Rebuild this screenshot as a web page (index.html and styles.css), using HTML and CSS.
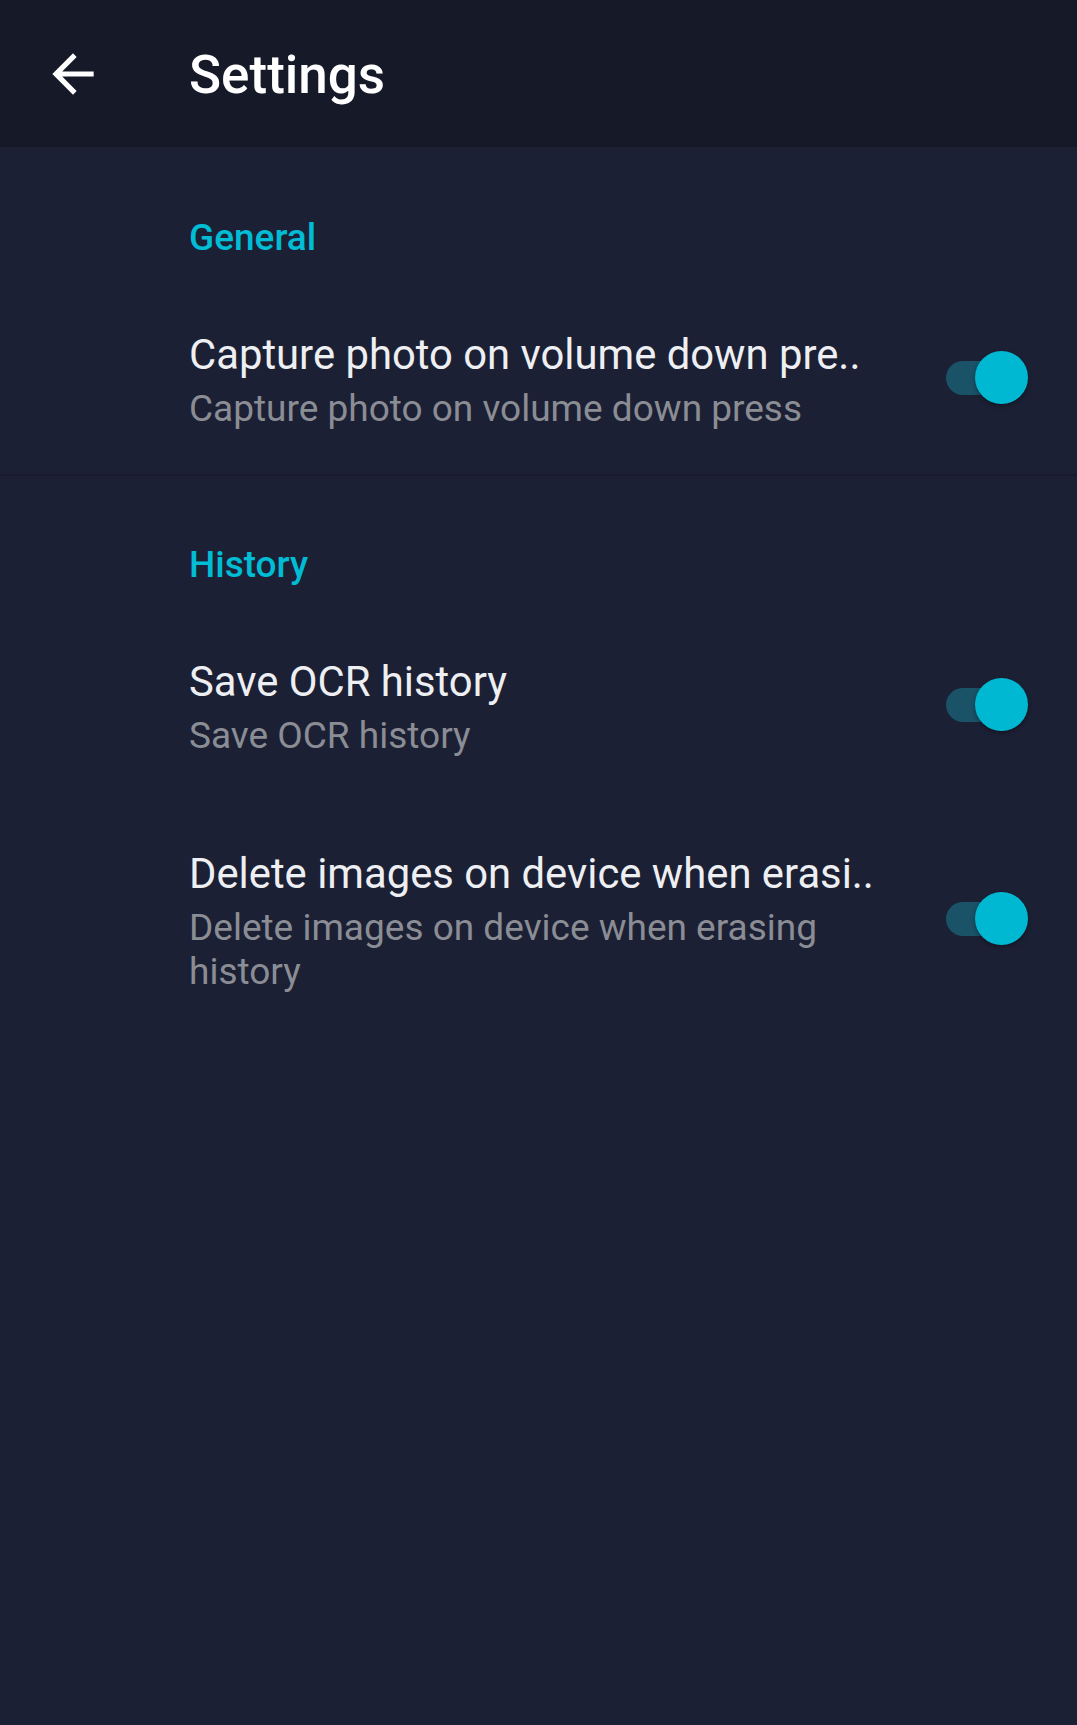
FILE: index.html
```html
<!DOCTYPE html>
<html lang="en">
<head>
<meta charset="utf-8">
<title>Settings</title>
<link rel="stylesheet" href="styles.css">
</head>
<body>
<header class="appbar">
  <svg class="back" viewBox="0 0 24 24" aria-hidden="true"><path d="M20 11H7.83l5.59-5.59L12 4l-8 8 8 8 1.41-1.41L7.83 13H20v-2z" fill="#ffffff"/></svg>
  <h1 class="title">Settings</h1>
</header>
<main>
  <section class="section">
    <div class="category">General</div>
    <div class="item">
      <div class="text">
        <div class="item-title">Capture photo on volume down pre..</div>
        <div class="item-sub">Capture photo on volume down press</div>
      </div>
      <div class="switch"><span class="track"></span><span class="thumb"></span></div>
    </div>
  </section>
  <section class="section">
    <div class="category">History</div>
    <div class="item">
      <div class="text">
        <div class="item-title">Save OCR history</div>
        <div class="item-sub">Save OCR history</div>
      </div>
      <div class="switch"><span class="track"></span><span class="thumb"></span></div>
    </div>
    <div class="item">
      <div class="text">
        <div class="item-title">Delete images on device when erasi..</div>
        <div class="item-sub">Delete images on device when erasing history</div>
      </div>
      <div class="switch"><span class="track"></span><span class="thumb"></span></div>
    </div>
  </section>
</main>
</body>
</html>
```

FILE: styles.css
```css
html, body {
  margin: 0;
  padding: 0;
}
body {
  background: #1c2034;
  font-family: Roboto, "Noto Sans", "Liberation Sans", sans-serif;
  min-height: 1725px;
}
.appbar {
  height: 147px;
  background: #151928;
  display: flex;
  align-items: center;
}
.back {
  width: 62px;
  height: 62px;
  margin-left: 42px;
  flex: none;
}
.title {
  margin: 0 0 0 85px;
  font-size: 53px;
  font-weight: 500;
  color: #ffffff;
  line-height: 62px;
  position: relative;
  top: 1px;
}
.section {
  border-top: 2px solid #191c2d;
}
.section:first-child {
  border-top-color: transparent;
}
.category {
  padding: 67px 0 22px 189px;
  font-size: 37px;
  line-height: 44px;
  font-weight: 500;
  color: #00bcd4;
}
.item {
  display: flex;
  align-items: center;
  padding: 45px 49px 45px 189px;
}
.text {
  flex: 1;
  min-width: 0;
  padding-right: 42px;
  margin-top: 2px;
  margin-bottom: -2px;
}
.item-title {
  font-size: 41.8px;
  line-height: 52px;
  color: #eeeff2;
  white-space: nowrap;
}
.item-sub {
  margin-top: 6px;
  font-size: 37px;
  line-height: 44px;
  color: #8b8d95;
}
.switch {
  position: relative;
  width: 82px;
  height: 53px;
  flex: none;
  margin-top: -2px;
}
.track {
  position: absolute;
  left: 0;
  right: 4px;
  top: 10px;
  height: 34px;
  border-radius: 17px;
  background: #1a5268;
}
.thumb {
  position: absolute;
  right: 0;
  top: 0;
  width: 53px;
  height: 53px;
  border-radius: 50%;
  background: #00b8d2;
  box-shadow: 0 2px 4px rgba(0, 0, 0, 0.35);
}
```
